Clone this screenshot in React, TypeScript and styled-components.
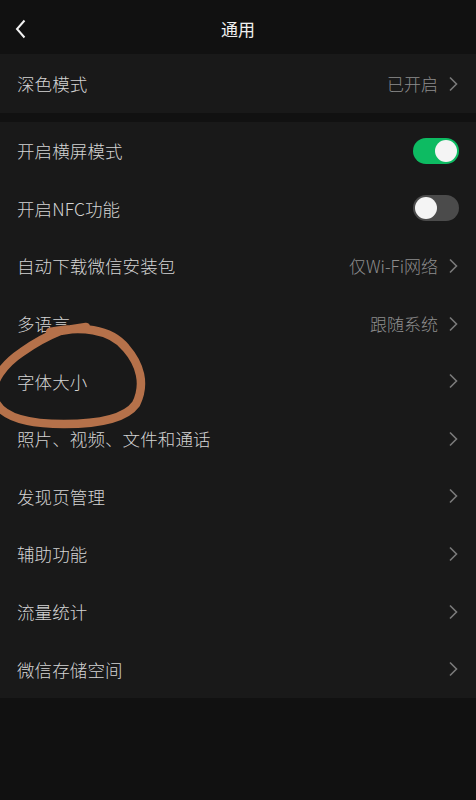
import React from 'react';
import styled, {createGlobalStyle} from 'styled-components';

const GlobalStyle = createGlobalStyle`
  html, body {
    margin: 0;
    padding: 0;
    background: #111111;
  }
  body {
    font-family: "Noto Sans CJK SC", "Noto Sans", sans-serif;
  }
`

const Page = styled.div`
  position: relative;
  width: 476px;
  min-height: 800px;
  background: #111111;
  display: flex;
  flex-direction: column;
  overflow: hidden;
`
const Header = styled.div`
  height: 54px;
  display: grid;
  grid-template-columns: 60px 1fr 60px;
  align-items: center;
  background: #111111;
  padding-top: 3px;
  box-sizing: border-box;
`
const Back = styled.div`
  padding-left: 15px;
  display: flex;
  align-items: center;
  height: 100%;
`
const Title = styled.div`
  text-align: center;
  color: #f0f0f0;
  font-size: 17px;
  line-height: 1;
`
const Section = styled.div<{gap?: boolean}>`
  background: #191919;
  margin-bottom: ${p => (p.gap ? '9px' : '0')};
  display: flex;
  flex-direction: column;
`
const Row = styled.div<{h: number}>`
  height: ${p => p.h}px;
  display: flex;
  align-items: center;
  justify-content: space-between;
  padding: 0 18px 0 17px;
`
const Label = styled.div`
  color: #d4d4d4;
  font-size: 17.5px;
  font-weight: 300;
  letter-spacing: 0.1px;
`
const Right = styled.div`
  display: flex;
  align-items: center;
  gap: 10px;
`
const Value = styled.div`
  color: #8d8d8d;
  font-size: 17px;
  font-weight: 300;
`
const Track = styled.div<{on: boolean}>`
  width: 46px;
  height: 26px;
  border-radius: 13px;
  background: ${p => (p.on ? '#0dbb62' : '#4b4b4b')};
  display: flex;
  align-items: center;
  justify-content: ${p => (p.on ? 'flex-end' : 'flex-start')};
  padding: 0 2px;
  box-sizing: border-box;
  margin-right: -1px;
`
const Knob = styled.div`
  width: 22px;
  height: 22px;
  border-radius: 50%;
  background: #f4f4f4;
`
const Annotation = styled.svg`
  position: absolute;
  left: 0;
  top: 318px;
  pointer-events: none;
`

const Chevron = () => (
    <svg width="10" height="16" viewBox="0 0 10 16">
        <polyline points="2,1.5 8.5,8 2,14.5" fill="none" stroke="#7a7a7a" strokeWidth="1.6"/>
    </svg>
)

type Item = {
    label: string
    value?: string
    toggle?: boolean
}

const items: Item[] = [
    {label: '开启横屏模式', toggle: true},
    {label: '开启NFC功能', toggle: false},
    {label: '自动下载微信安装包', value: '仅Wi-Fi网络'},
    {label: '多语言', value: '跟随系统'},
    {label: '字体大小'},
    {label: '照片、视频、文件和通话'},
    {label: '发现页管理'},
    {label: '辅助功能'},
    {label: '流量统计'},
    {label: '微信存储空间'},
]

export default function App() {
    return (
        <Page>
            <GlobalStyle/>
            <Header>
                <Back>
                    <svg width="12" height="20" viewBox="0 0 12 20">
                        <polyline points="9.5,1.5 2,10 9.5,18.5" fill="none" stroke="#f2f2f2" strokeWidth="2"/>
                    </svg>
                </Back>
                <Title>通用</Title>
                <div/>
            </Header>
            <Section gap>
                <Row h={59}>
                    <Label>深色模式</Label>
                    <Right><Value>已开启</Value><Chevron/></Right>
                </Row>
            </Section>
            <Section>
                {items.map(it => (
                    <Row h={57.6} key={it.label}>
                        <Label>{it.label}</Label>
                        {it.toggle !== undefined ? (
                            <Track on={it.toggle}><Knob/></Track>
                        ) : (
                            <Right>
                                {it.value && <Value>{it.value}</Value>}
                                <Chevron/>
                            </Right>
                        )}
                    </Row>
                ))}
            </Section>
            <Annotation width="160" height="120" viewBox="0 0 160 120">
                <path
                    d="M50 14 C80 8 110 10 126 30 C140 46 146 66 136 86 C126 100 100 106 64 106 C30 106 0 100 -6 80 C-10 64 4 46 22 34 C36 24 50 17 60 13 L86 9"
                    fill="none" stroke="#b5714a" strokeWidth="8.5" strokeLinecap="round" strokeLinejoin="round"/>
            </Annotation>
        </Page>
    )
}
